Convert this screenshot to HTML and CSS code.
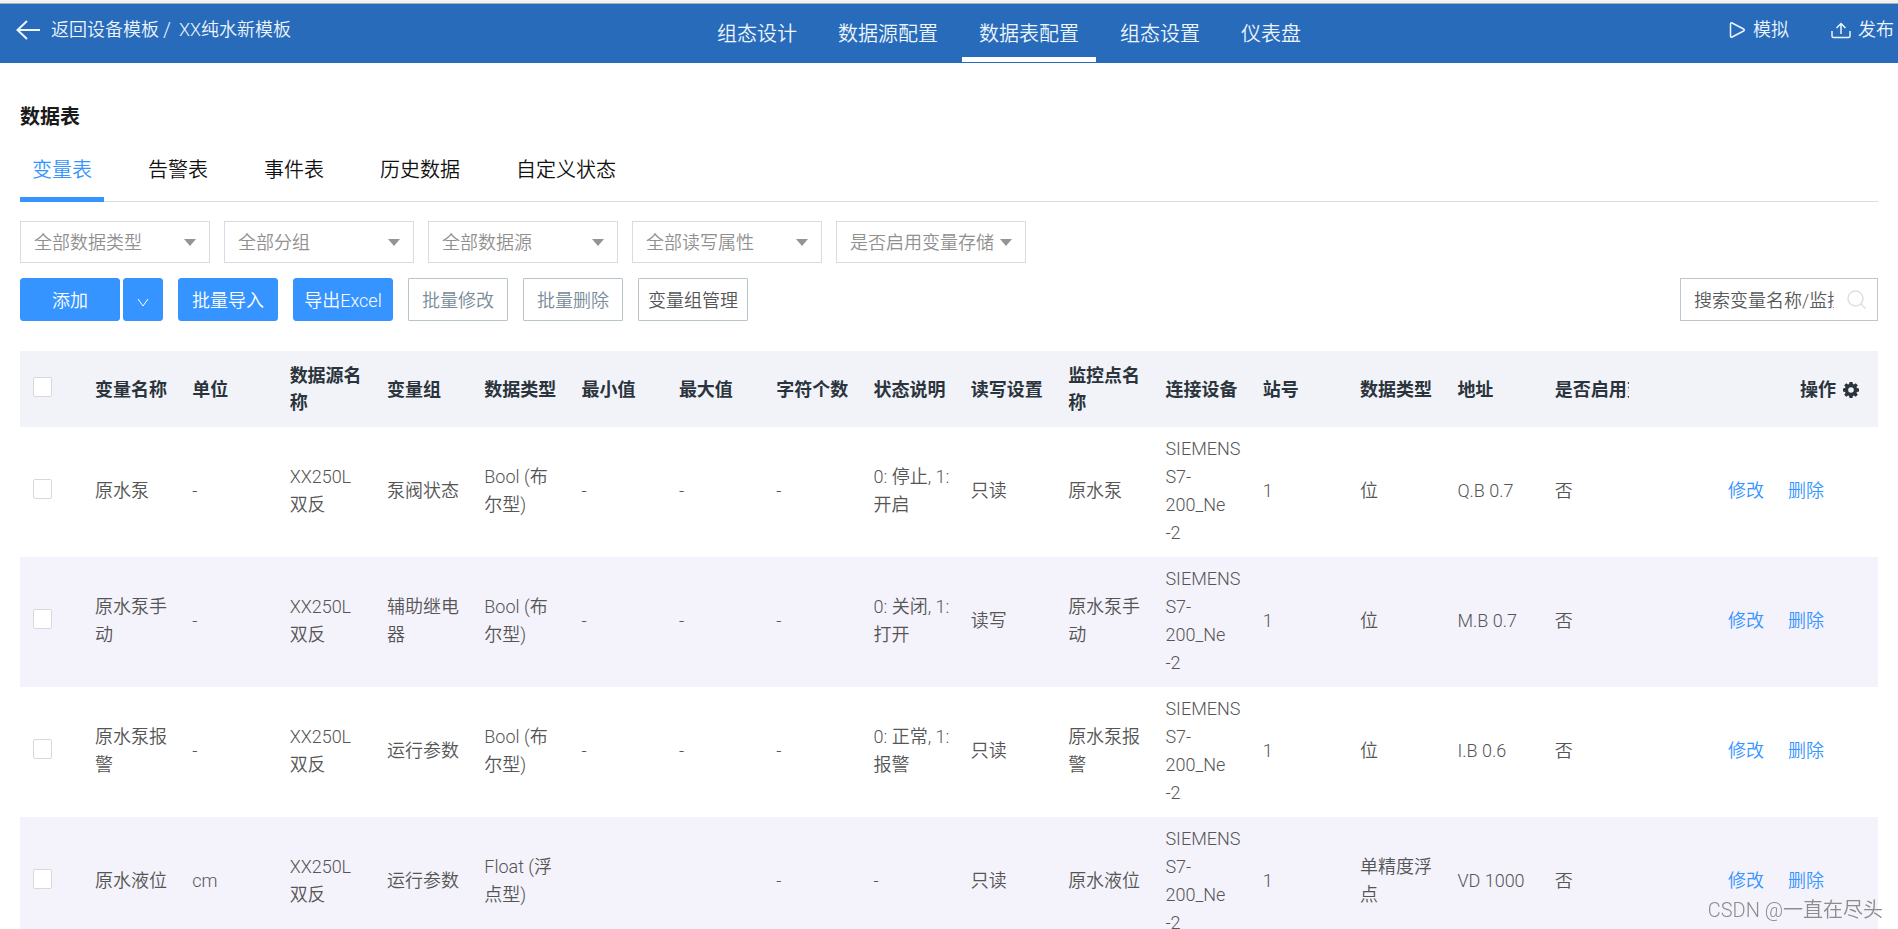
FILE: index.html
```html
<!DOCTYPE html>
<html lang="zh-CN">
<head>
<meta charset="utf-8">
<title>数据表配置</title>
<link rel="stylesheet" href="styles.css">
</head>
<body>
<header class="topbar">
  <div class="crumbs">
    <a class="back" href="#"><svg class="icon-back" viewBox="0 0 24 20"><path d="M11 1 1.500 10 11 19M1.500 10H24"/></svg>返回设备模板</a>
    <span class="slash">/</span>
    <span>XX纯水新模板</span>
  </div>
  <nav class="mainnav">
    <a href="#">组态设计</a>
    <a href="#">数据源配置</a>
    <a href="#" class="active">数据表配置</a>
    <a href="#">组态设置</a>
    <a href="#">仪表盘</a>
  </nav>
  <div class="actions">
    <button type="button"><svg class="icon-play" viewBox="0 0 17 17"><path d="M1.500 2.500v12c0 1 .8 1.400 1.600 1l11.500-6c.9-.5.9-1.500 0-2l-11.500-6c-.8-.4-1.600 0-1.600 1z"/></svg>模拟</button>
    <button type="button"><svg class="icon-up" viewBox="0 0 20 17"><path d="M1 9v5c0 1 .7 1.500 1.500 1.500h15c.8 0 1.500-.5 1.500-1.500V9M10 12V1.500M5.500 6 10 1.500 14.500 6"/></svg>发布</button>
  </div>
</header>
<main class="page">
  <h1 class="title">数据表</h1>
  <nav class="tabs">
    <a href="#" class="active">变量表</a>
    <a href="#">告警表</a>
    <a href="#">事件表</a>
    <a href="#">历史数据</a>
    <a href="#">自定义状态</a>
  </nav>
  <div class="filters">
    <label class="pick"><select aria-label="数据类型"><option>全部数据类型</option></select></label>
    <label class="pick"><select aria-label="分组"><option>全部分组</option></select></label>
    <label class="pick"><select aria-label="数据源"><option>全部数据源</option></select></label>
    <label class="pick"><select aria-label="读写属性"><option>全部读写属性</option></select></label>
    <label class="pick"><select aria-label="变量存储"><option>是否启用变量存储</option></select></label>
  </div>
  <div class="toolbar">
    <div class="split">
      <button type="button" class="btn primary">添加</button>
      <button type="button" class="btn primary more" aria-label="更多"><svg class="icon-down" viewBox="0 0 12 9"><path d="M1 1l5 7 5-7"/></svg></button>
    </div>
    <button type="button" class="btn primary">批量导入</button>
    <button type="button" class="btn primary">导出Excel</button>
    <button type="button" class="btn muted">批量修改</button>
    <button type="button" class="btn muted">批量删除</button>
    <button type="button" class="btn plain">变量组管理</button>
    <label class="search">
      <input type="text" aria-label="搜索" placeholder="搜索变量名称/监控点名称">
      <svg class="icon-search" viewBox="0 0 19 19"><circle cx="8.500" cy="8.500" r="7.500"/><path d="M14 14l4.500 4.500"/></svg>
    </label>
  </div>
  <table class="grid">
    <colgroup><col class="c-check"><col span="16"><col class="c-ops"></colgroup>
    <thead>
      <tr>
        <th><input type="checkbox" aria-label="全选"></th>
        <th>变量名称</th><th>单位</th><th>数据源名<br>称</th><th>变量组</th><th>数据类型</th><th>最小值</th><th>最大值</th><th>字符个数</th><th>状态说明</th><th>读写设置</th><th>监控点名<br>称</th><th>连接设备</th><th>站号</th><th>数据类型</th><th>地址</th>
        <th><div class="clip">是否启用变量存储</div></th>
        <th class="ops-head">操作<svg class="icon-gear" viewBox="0 0 16 16"><path fill-rule="evenodd" d="M6.500 0h3l.4 2.100 1 .4L12.700 1.200l2.100 2.100-1.300 1.800.4 1 2.100.4v3l-2.100.4-.4 1 1.300 1.800-2.100 2.100-1.800-1.300-1 .4-.4 2.100h-3l-.4-2.100-1-.4-1.800 1.300-2.100-2.100 1.300-1.800-.4-1L0 9.500v-3l2.100-.4.4-1L1.200 3.300l2.100-2.100 1.800 1.300 1-.4zM8 5.200a2.800 2.800 0 1 0 0 5.600 2.800 2.800 0 0 0 0-5.600z"/></svg></th>
      </tr>
    </thead>
    <tbody>
      <tr>
        <td><input type="checkbox" aria-label="原水泵"></td>
        <td>原水泵</td><td>-</td><td>XX250L<br>双反</td><td>泵阀状态</td><td>Bool (布<br>尔型)</td><td>-</td><td>-</td><td>-</td><td>0: 停止, 1:<br>开启</td><td>只读</td><td>原水泵</td><td>SIEMENS<br>S7-<br>200_Ne<br>-2</td><td>1</td><td>位</td><td>Q.B 0.7</td><td>否</td>
        <td class="ops"><a href="#">修改</a><a href="#">删除</a></td>
      </tr>
      <tr>
        <td><input type="checkbox" aria-label="原水泵手动"></td>
        <td>原水泵手<br>动</td><td>-</td><td>XX250L<br>双反</td><td>辅助继电<br>器</td><td>Bool (布<br>尔型)</td><td>-</td><td>-</td><td>-</td><td>0: 关闭, 1:<br>打开</td><td>读写</td><td>原水泵手<br>动</td><td>SIEMENS<br>S7-<br>200_Ne<br>-2</td><td>1</td><td>位</td><td>M.B 0.7</td><td>否</td>
        <td class="ops"><a href="#">修改</a><a href="#">删除</a></td>
      </tr>
      <tr>
        <td><input type="checkbox" aria-label="原水泵报警"></td>
        <td>原水泵报<br>警</td><td>-</td><td>XX250L<br>双反</td><td>运行参数</td><td>Bool (布<br>尔型)</td><td>-</td><td>-</td><td>-</td><td>0: 正常, 1:<br>报警</td><td>只读</td><td>原水泵报<br>警</td><td>SIEMENS<br>S7-<br>200_Ne<br>-2</td><td>1</td><td>位</td><td>I.B 0.6</td><td>否</td>
        <td class="ops"><a href="#">修改</a><a href="#">删除</a></td>
      </tr>
      <tr>
        <td><input type="checkbox" aria-label="原水液位"></td>
        <td>原水液位</td><td>cm</td><td>XX250L<br>双反</td><td>运行参数</td><td>Float (浮<br>点型)</td><td></td><td></td><td>-</td><td>-</td><td>只读</td><td>原水液位</td><td>SIEMENS<br>S7-<br>200_Ne<br>-2</td><td>1</td><td>单精度浮<br>点</td><td>VD 1000</td><td>否</td>
        <td class="ops"><a href="#">修改</a><a href="#">删除</a></td>
      </tr>
    </tbody>
  </table>
</main>
<div class="watermark">CSDN @一直在尽头</div>
</body>
</html>
```
FILE: styles.css
```css
* { box-sizing: border-box; }
body {
  margin: 0;
  height: 100vh;
  overflow: hidden;
  background: #fff;
  color: #555;
  font: 350 18px/28px Roboto, "Noto Sans CJK SC", sans-serif;
}
a { color: inherit; text-decoration: none; }
button, input, select { font: inherit; color: inherit; }
svg { fill: none; stroke: currentColor; flex: none; }

.topbar {
  display: grid;
  grid-template-columns: 1fr auto 1fr;
  height: 63px;
  border-top: 3px solid #f2f2f2;
  background: #276bba;
  box-shadow: inset 0 1px #a9b0b8;
  color: #eef5fd;
}
.crumbs { display: flex; align-items: flex-start; gap: 4px; padding: 13px 0 0 16px; }
.crumbs .slash { margin-right: 4px; font-size: 20px; }
.back { display: flex; align-items: center; gap: 11px; }
.icon-back { width: 24px; height: 20px; stroke-width: 2; }
.mainnav { display: flex; gap: 7px; margin-left: 120px; font-size: 20px; }
.mainnav a { padding: 17px 17px 0; border-bottom: 5px solid transparent; margin-bottom: 1px; }
.mainnav .active { border-color: #fff; }
.actions { display: flex; justify-content: flex-end; align-items: flex-start; gap: 42px; padding: 13px 4px 0 0; }
.actions button { display: flex; align-items: center; gap: 7px; padding: 0; border: 0; background: none; }
.icon-play { width: 17px; height: 18px; stroke-width: 1.500; }
.icon-up { width: 20px; height: 17px; stroke-width: 1.500; }

.page { padding: 40px 20px 0; }
.title { margin: 0; color: #1a1a1a; font-size: 20px; font-weight: 700; }
.tabs {
  display: flex;
  gap: 32px;
  margin-top: 25px;
  border-bottom: 1px solid #dadbdf;
  color: #111;
  font-size: 20px;
}
.tabs a { padding: 0 12px 13px; border-bottom: 5px solid transparent; margin-bottom: -1px; }
.tabs .active { color: #3594ff; border-color: #3594ff; }

.filters { display: flex; gap: 14px; margin-top: 19px; }
.pick { position: relative; width: 190px; }
.pick select {
  display: block;
  width: 100%;
  height: 42px;
  padding: 2px 24px 0 13px;
  border: 1px solid #d8dbe5;
  border-radius: 0;
  background: #fff;
  color: #909090;
  appearance: none;
}
.pick::after {
  content: "";
  position: absolute;
  top: 18px;
  right: 14px;
  border: 6px solid transparent;
  border-top: 7px solid #949494;
  border-bottom: 0;
  pointer-events: none;
}

.toolbar { display: flex; gap: 15px; margin-top: 15px; }
.split { display: flex; gap: 3px; }
.btn {
  min-width: 100px;
  height: 43px;
  padding: 2px 9px 0;
  border: 1px solid #b8c4cc;
  border-radius: 1px;
  background: #fff;
}
.primary { border-color: #3594ff; border-radius: 3px; background: #3594ff; color: #fff; }
.more { min-width: 40px; }
.icon-down { width: 12px; height: 9px; }
.muted { color: #788c98; }
.search {
  display: flex;
  align-items: center;
  gap: 13px;
  width: 198px;
  height: 43px;
  margin-left: auto;
  padding: 0 11px 0 13px;
  border: 1px solid #c0c4cc;
}
.search input { flex: 1; min-width: 0; padding: 2px 0 0; border: 0; outline: 0; }
.search input::placeholder { color: #58595c; opacity: 1; }
.icon-search { width: 19px; height: 19px; color: #dcdfe6; stroke-width: 1.500; }

.grid { width: 100%; margin-top: 30px; border-collapse: collapse; table-layout: fixed; line-height: 27px; }
.c-check { width: 63px; }
.c-ops { width: 238px; }
.grid th, .grid td { padding: 8px 4px 8px 12px; text-align: left; vertical-align: middle; }
.grid th { height: 76px; background: #f1f3f8; color: #2b343c; font-weight: 700; }
.grid td { padding-bottom: 10px; line-height: 28px; }
.grid tbody tr { height: 130px; }
.grid tbody tr:nth-child(even) { background: #f4f2fb; }
.grid input {
  display: block;
  width: 19px;
  height: 20px;
  margin: 0 0 4px 1px;
  border: 1px solid #d8d8dc;
  border-radius: 2px;
  background: #fff;
  appearance: none;
}
.clip { width: 74px; overflow: hidden; white-space: nowrap; }
.grid .ops-head { padding-right: 19px; text-align: right; }
.icon-gear { width: 16px; height: 16px; margin-left: 7px; fill: currentColor; stroke: none; vertical-align: -2px; }
.grid .ops { padding-right: 54px; color: #3594ff; text-align: right; }
.ops a + a { margin-left: 24px; }

.watermark { position: fixed; right: 15px; bottom: 5px; color: #8c8c8c; font-size: 20px; }
```
